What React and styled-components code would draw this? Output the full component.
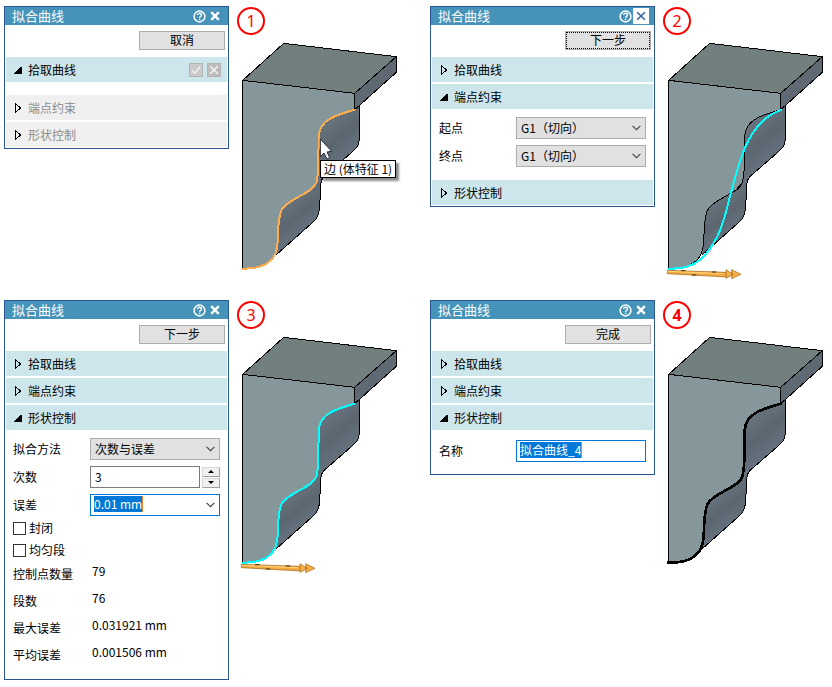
import React, { useId } from "react";
import styled, { createGlobalStyle } from "styled-components";

const GlobalStyle = createGlobalStyle`
  * { box-sizing: border-box; }
  body {
    margin: 0;
    background: #fff;
    color: #000;
    font: 12px/16px "Noto Sans CJK SC", sans-serif;
  }
  button, input, select { font: inherit; color: inherit; margin: 0; }
`;

const Page = styled.main`
  display: grid;
  grid-template-columns: repeat(2, minmax(0, 1fr));
  gap: 20px 28px;
  align-items: start;
  padding: 6px 4px;
`;

const Step = styled.section`
  display: flex;
  align-items: flex-start;
`;

const Panel = styled.form`
  flex: 1;
  min-width: 0;
  border: 1px solid #2b579a;
  background: #fff;
`;

const TitleBar = styled.header`
  display: flex;
  align-items: center;
  height: 18px;
  padding: 0 5px 0 7px;
  background: #4693b9;
  color: #fff;
`;

const Title = styled.h2`
  flex: 1;
  margin: 0;
  font-size: 13px;
  line-height: 16px;
  font-weight: 400;
`;

const TitleButton = styled.button`
  display: grid;
  place-items: center;
  width: 16px;
  height: 16px;
  padding: 0;
  border: 0;
  background: ${(p) => (p.$hot ? "#fff" : "transparent")};
  color: ${(p) => (p.$hot ? "#3a5fa5" : "#fff")};
`;

const Actions = styled.div`
  display: flex;
  justify-content: flex-end;
  padding: 6px 3px 7px;
`;

const ActionButton = styled.button`
  width: 86px;
  height: 19px;
  padding: 0 0 2px;
  border: 1px solid #adadad;
  background: #e1e1e1;
  line-height: 14px;
  outline: ${(p) => (p.$focused ? "1px dotted #000" : "none")};
  outline-offset: -2px;
`;

const Groups = styled.div`
  display: flex;
  flex-direction: column;
  gap: 2px;
  padding: 0 1px 1px;
`;

const GroupBar = styled.div`
  display: flex;
  align-items: center;
  gap: 4px;
  height: 25px;
  padding-right: 6px;
  background: ${(p) => (p.$disabled ? "#f0f0f0" : "#cde6eb")};
`;

const GroupToggle = styled.button`
  display: flex;
  flex: 1;
  align-items: center;
  gap: 3px;
  height: 25px;
  padding: 0 0 0 7px;
  border: 0;
  background: none;
  color: #000;
  text-align: left;
`;

const GroupName = styled.span`
  color: ${(p) => (p.$disabled ? "#8c8c8c" : "#000")};
`;

const MiniButton = styled.button`
  display: grid;
  place-items: center;
  width: 14px;
  height: 14px;
  padding: 0;
  border: 1px solid #b4b4b4;
  background: ${(p) => (p.$dark ? "#bcbcbc" : "#cbcbcb")};
  color: #f2f2f2;
`;

const Body = styled.div`
  display: flex;
  flex-direction: column;
  gap: 6px;
  padding: ${(p) => p.$top}px 7px 11px;
`;

const FieldRow = styled.div`
  display: flex;
  align-items: center;
  height: 22px;
`;

const FieldLabel = styled.label`
  flex: 0 0 77px;
`;

const Control = styled.div`
  display: grid;
  flex: 1;
  min-width: 0;
  align-items: center;
  height: 22px;
  border: 1px solid ${(p) => (p.$active ? "#0078d7" : p.$grey ? "#adadad" : "#7a7a7a")};
  background: ${(p) => (p.$grey ? "#e1e1e1" : "#fff")};
  & > * { grid-area: 1 / 1; }
  & > svg { justify-self: end; margin-right: 4px; pointer-events: none; }
`;

const Select = styled.select`
  width: 100%;
  height: 20px;
  padding: 0 4px;
  border: 0;
  background: none;
  appearance: none;
  outline: none;
`;

const TextInput = styled.input`
  width: 100%;
  height: 20px;
  padding: 0 4px 2px;
  border: 0;
  background: none;
  outline: none;
`;

const MarkedInput = styled.input`
  field-sizing: content;
  justify-self: start;
  height: 16px;
  margin: 0 0 2px 3px;
  padding: 0 0 1px;
  border: 0;
  border-right: 1px solid #f08030;
  background: #0078d7;
  color: #fff;
  line-height: 15px;
  outline: none;
`;

const Spinner = styled.div`
  display: flex;
  flex-direction: column;
  gap: 1px;
  width: 18px;
  margin-left: 2px;
`;

const SpinButton = styled.button`
  display: grid;
  place-items: center;
  height: 10px;
  padding: 0;
  border: 1px solid #a0a0a0;
  border-top-color: #d8d8d8;
  border-left-color: #d8d8d8;
  background: #f0f0f0;
`;

const Checks = styled.div`
  margin-top: -5px;
`;

const CheckLabel = styled.label`
  display: flex;
  align-items: center;
  gap: 3px;
  height: 22px;
`;

const Checkbox = styled.input`
  appearance: none;
  width: 13px;
  height: 13px;
  border: 1px solid #333;
  background: #fff;
`;

const Readings = styled.dl`
  margin: -6px 0 -2px;
`;

const Reading = styled.div`
  display: flex;
  height: 27px;
  padding-top: 2px;
`;

const ReadingName = styled.dt`
  flex: 0 0 79px;
  padding-top: 3px;
`;

const ReadingValue = styled.dd`
  margin: 0;
`;

const Scene = styled.figure`
  position: relative;
  flex: 0 0 173px;
  margin: 0;
`;

const Badge = styled.figcaption`
  display: grid;
  place-items: center;
  width: 28px;
  height: 28px;
  margin: 1px 0 0 8px;
  border: 2px solid #f00;
  border-radius: 50%;
  color: #f00;
  font: ${(p) => (p.$bold ? 700 : 400)} 16px/24px "Noto Sans", sans-serif;
`;

const Drawing = styled.svg`
  display: block;
  width: 173px;
  height: 245px;
`;

const Tooltip = styled.div`
  position: absolute;
  left: 91px;
  top: 154px;
  padding: 0 3px;
  border: 1px solid #000;
  background: #fff;
  line-height: 16px;
  white-space: nowrap;
  box-shadow: 3px 3px 2px rgba(0, 0, 0, 0.45);
`;

function HelpIcon() {
  return (
    <svg width="13" height="13" viewBox="0 0 13 13" fill="none" stroke="currentColor">
      <circle cx="6.5" cy="6.5" r="5.4" strokeWidth="1.5" />
      <path d="M4.6 5.1c0-2.5 3.9-2.3 3.9-.1 0 1.3-1.9 1.4-1.9 2.8" strokeWidth="1.4" />
      <path d="M6.6 8.7v1.4" strokeWidth="1.5" />
    </svg>
  );
}

function CloseIcon({ thin }) {
  return (
    <svg width="10" height="10" viewBox="0 0 10 10" fill="none" stroke="currentColor" strokeWidth={thin ? 1.6 : 2.4}>
      <path d="M1.2 1.2L8.8 8.8M8.8 1.2L1.2 8.8" />
    </svg>
  );
}

function Twisty({ open }) {
  return (
    <svg width="12" height="12" viewBox="0 0 12 12" shapeRendering="crispEdges">
      {open ? (
        <path d="M8.5 2.5V9.5H1Z" fill="#000" />
      ) : (
        <path d="M2.5 1.5L7.5 6L2.5 10.5Z" fill="none" stroke="#000" />
      )}
    </svg>
  );
}

function Chevron() {
  return (
    <svg width="9" height="6" viewBox="0 0 9 6" fill="none" stroke="#444" strokeWidth="1.1">
      <path d="M.6 .8L4.5 4.7L8.4 .8" />
    </svg>
  );
}

function Group({ name, open, disabled, tools, top = 8, children }) {
  return (
    <div>
      <GroupBar $disabled={disabled}>
        <GroupToggle type="button" aria-expanded={!!open} disabled={disabled}>
          <Twisty open={open} />
          <GroupName $disabled={disabled}>{name}</GroupName>
        </GroupToggle>
        {tools}
      </GroupBar>
      {open && <Body $top={top}>{children}</Body>}
    </div>
  );
}

function SelectField({ label, value }) {
  const id = useId();
  return (
    <FieldRow>
      <FieldLabel htmlFor={id}>{label}</FieldLabel>
      <Control $grey>
        <Select id={id} defaultValue={value}>
          <option>{value}</option>
        </Select>
        <Chevron />
      </Control>
    </FieldRow>
  );
}

function MarkedField({ label, value, combo }) {
  const id = useId();
  return (
    <FieldRow>
      <FieldLabel htmlFor={id}>{label}</FieldLabel>
      <Control $active>
        <MarkedInput id={id} defaultValue={value} />
        {combo && <Chevron />}
      </Control>
    </FieldRow>
  );
}

function NumberField({ label, value }) {
  const id = useId();
  return (
    <FieldRow>
      <FieldLabel htmlFor={id}>{label}</FieldLabel>
      <Control>
        <TextInput id={id} defaultValue={value} inputMode="numeric" />
      </Control>
      <Spinner>
        <SpinButton type="button" aria-label="增加">
          <svg width="6" height="3" viewBox="0 0 6 3"><path d="M0 3L3 0L6 3Z" /></svg>
        </SpinButton>
        <SpinButton type="button" aria-label="减少">
          <svg width="6" height="3" viewBox="0 0 6 3"><path d="M0 0L3 3L6 0Z" /></svg>
        </SpinButton>
      </Spinner>
    </FieldRow>
  );
}

function Check({ label }) {
  return (
    <CheckLabel>
      <Checkbox type="checkbox" />
      {label}
    </CheckLabel>
  );
}

function Dialog({ action, focused, closeHot, children }) {
  return (
    <Panel onSubmit={(e) => e.preventDefault()}>
      <TitleBar>
        <Title>拟合曲线</Title>
        <TitleButton type="button" aria-label="帮助"><HelpIcon /></TitleButton>
        <TitleButton type="button" aria-label="关闭" $hot={closeHot}><CloseIcon thin={closeHot} /></TitleButton>
      </TitleBar>
      <Actions>
        <ActionButton type="button" $focused={focused}>{action}</ActionButton>
      </Actions>
      <Groups>{children}</Groups>
    </Panel>
  );
}

const PROFILE =
  "M377 326C350 334 325 341 305 352C283 364 271 381 269 405L268 495C267 515 266 530 262 545C252 568 228 576 208 588C185 602 168 608 157 628C149 648 148 670 147 700C146 735 144 752 132 770C112 795 85 803 41 803";
const FITTED =
  "M377 327C330 344 292 388 269 442C247 497 235 545 215 625C198 690 178 738 135 777C108 798 82 803 41 803";
const SIDE =
  "M392 314V400C392 425 388 436 375 448L290 522C280 530 278 534 276 545L272 615C271 636 267 648 258 658L141 762";

function Bracket({ id, curve, color, width, arrow, cursor }) {
  return (
    <Drawing viewBox="0 102 519 735" aria-hidden="true">
      <defs>
        <linearGradient id={id} gradientUnits="userSpaceOnUse" x1="270" y1="370" x2="370" y2="490">
          <stop offset="0" stopColor="#697580" />
          <stop offset="0.45" stopColor="#5b6670" />
          <stop offset="1" stopColor="#697783" />
        </linearGradient>
        <linearGradient id={id + "low"} gradientUnits="userSpaceOnUse" x1="150" y1="610" x2="230" y2="710">
          <stop offset="0" stopColor="#697580" />
          <stop offset="0.5" stopColor="#5b6670" />
          <stop offset="1" stopColor="#697783" />
        </linearGradient>
      </defs>
      <path d={SIDE + "L90 650L200 300L377 300Z"} fill={`url(#${id})`} />
      <path d="M276 545L272 615C271 636 267 648 258 658L141 762L120 620L262 545Z" fill={`url(#${id}low)`} />
      <path d={PROFILE + "V238L377 277Z"} fill="#85979b" />
      <g stroke="#000" strokeWidth="3" strokeLinejoin="round" shapeRendering="crispEdges">
        <path d="M41 238L164 127L502 167L377 277Z" fill="#71807f" />
        <path d="M377 277L502 167V214L377 326Z" fill="#5e6974" />
        <path d={SIDE} fill="none" />
        <path d="M41 238V803M245 562L262 545" fill="none" />
        <path d={PROFILE} fill="none" />
      </g>
      <path d={curve} fill="none" stroke={color} strokeWidth={width} strokeLinecap="square" shapeRendering="crispEdges" />
      {arrow && (
        <g stroke="#9b6014" strokeWidth="2">
          <path d="M37 808L215 814V828L37 818Z" fill="#f2ab43" />
          <path d="M213 806L235 820L213 832ZM230 806L258 820L230 833Z" fill="#f5b04a" />
          <path d="M38 811L205 818" stroke="#ffd37e" strokeWidth="3" />
          <path d="M78 809H92M170 813H184M110 822H124" stroke="#4b2d05" strokeWidth="3" />
        </g>
      )}
      {cursor && (
        <path
          d="M274 414V467L285 456L294 474L302 470L294 453L308 451Z"
          fill="#fff"
          stroke="#222b3a"
          strokeWidth="3"
        />
      )}
    </Drawing>
  );
}

export default function App() {
  return (
    <>
      <GlobalStyle />
      <Page>
        <Step>
          <Dialog action="取消">
            <Group
              name="拾取曲线"
              open
              top={0}
              tools={
                <>
                  <MiniButton type="button" aria-label="确定">
                    <svg width="10" height="10" viewBox="0 0 10 10" fill="none" stroke="currentColor" strokeWidth="1.4">
                      <path d="M1 5.4L3.8 8.2L9 2" />
                    </svg>
                  </MiniButton>
                  <MiniButton type="button" aria-label="清除" $dark>
                    <CloseIcon thin />
                  </MiniButton>
                </>
              }
            />
            <Group name="端点约束" disabled />
            <Group name="形状控制" disabled />
          </Dialog>
          <Scene>
            <Badge>1</Badge>
            <Bracket id="s1" curve={PROFILE} color="#ffac4d" width="6" cursor />
            <Tooltip role="tooltip">边 (体特征 1)</Tooltip>
          </Scene>
        </Step>

        <Step>
          <Dialog action="下一步" focused closeHot>
            <Group name="拾取曲线" />
            <Group name="端点约束" open>
              <SelectField label="起点" value="G1（切向）" />
              <SelectField label="终点" value="G1（切向）" />
            </Group>
            <Group name="形状控制" />
          </Dialog>
          <Scene>
            <Badge>2</Badge>
            <Bracket id="s2" curve={FITTED} color="#00ffff" width="6" arrow />
          </Scene>
        </Step>

        <Step>
          <Dialog action="下一步">
            <Group name="拾取曲线" />
            <Group name="端点约束" />
            <Group name="形状控制" open>
              <SelectField label="拟合方法" value="次数与误差" />
              <NumberField label="次数" value="3" />
              <MarkedField label="误差" value="0.01 mm" combo />
              <Checks>
                <Check label="封闭" />
                <Check label="均匀段" />
              </Checks>
              <Readings>
                <Reading><ReadingName>控制点数量</ReadingName><ReadingValue>79</ReadingValue></Reading>
                <Reading><ReadingName>段数</ReadingName><ReadingValue>76</ReadingValue></Reading>
                <Reading><ReadingName>最大误差</ReadingName><ReadingValue>0.031921 mm</ReadingValue></Reading>
                <Reading><ReadingName>平均误差</ReadingName><ReadingValue>0.001506 mm</ReadingValue></Reading>
              </Readings>
            </Group>
          </Dialog>
          <Scene>
            <Badge>3</Badge>
            <Bracket id="s3" curve={PROFILE} color="#00ffff" width="6" arrow />
          </Scene>
        </Step>

        <Step>
          <Dialog action="完成">
            <Group name="拾取曲线" />
            <Group name="端点约束" />
            <Group name="形状控制" open top={10}>
              <MarkedField label="名称" value="拟合曲线_4" />
            </Group>
          </Dialog>
          <Scene>
            <Badge $bold>4</Badge>
            <Bracket id="s4" curve={PROFILE} color="#000" width="8" />
          </Scene>
        </Step>
      </Page>
    </>
  );
}
